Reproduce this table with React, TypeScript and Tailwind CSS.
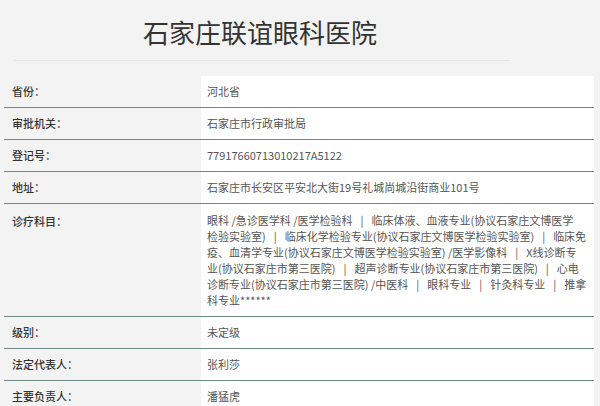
import React from "react";

const Pipe = () => <span className="mx-[8px]">|</span>;

function Row({ label, children, tall = false }: { label: string; children: React.ReactNode; tall?: boolean }) {
  return (
    <div className="flex border-b border-[#6e8a83] ml-[4px] w-[590px]">
      <div className={`w-[197px] pl-[8px] text-[#333] font-medium ${tall ? "pt-[9px]" : "flex items-center h-[31px]"}`}>
        {label}
      </div>
      <div className={`flex-1 bg-white pl-[6px] text-[#555] ${tall ? "py-[8px] leading-[16px]" : "flex items-center h-[31px]"}`}>
        {children}
      </div>
    </div>
  );
}

export default function App() {
  return (
    <div
      className="w-[600px] h-[406px] overflow-hidden bg-[#f3f3f3] text-[11px]"
      style={{ fontFamily: '"Noto Sans CJK SC", "Noto Sans", sans-serif' }}
    >
      <div className="w-[520px]">
        <div className="h-[60px] flex items-center justify-center text-[26px] text-[#333] pt-[2px]">
          石家庄联谊眼科医院
        </div>
        <div className="ml-[14px] w-[496px] border-t border-[#e6e6e6]" />
      </div>
      <div className="h-[15px]" />
      <div className="flex flex-col">
        <div className="flex border-b border-[#6e8a83] ml-[4px] w-[590px]">
          <div className="w-[197px] pl-[8px] text-[#333] font-medium flex items-center h-[31px]">省份：</div>
          <div className="flex-1 bg-white pl-[6px] text-[#555] flex items-center h-[31px]">河北省</div>
        </div>
        <Row label="审批机关：">石家庄市行政审批局</Row>
        <Row label="登记号：">77917660713010217A5122</Row>
        <Row label="地址：">石家庄市长安区平安北大街19号礼城尚城沿街商业101号</Row>
        <Row label="诊疗科目：" tall>
          <div className="whitespace-nowrap">
            <div>眼科 /急诊医学科 /医学检验科<Pipe />临床体液、血液专业(协议石家庄文博医学</div>
            <div>检验实验室)<Pipe />临床化学检验专业(协议石家庄文博医学检验实验室)<Pipe />临床免</div>
            <div>疫、血清学专业(协议石家庄文博医学检验实验室) /医学影像科<Pipe />X线诊断专</div>
            <div>业(协议石家庄市第三医院)<Pipe />超声诊断专业(协议石家庄市第三医院)<Pipe />心电</div>
            <div>诊断专业(协议石家庄市第三医院) /中医科<Pipe />眼科专业<Pipe />针灸科专业<Pipe />推拿</div>
            <div>科专业******</div>
          </div>
        </Row>
        <Row label="级别：">未定级</Row>
        <Row label="法定代表人：">张利莎</Row>
        <Row label="主要负责人：">潘猛虎</Row>
      </div>
    </div>
  );
}
